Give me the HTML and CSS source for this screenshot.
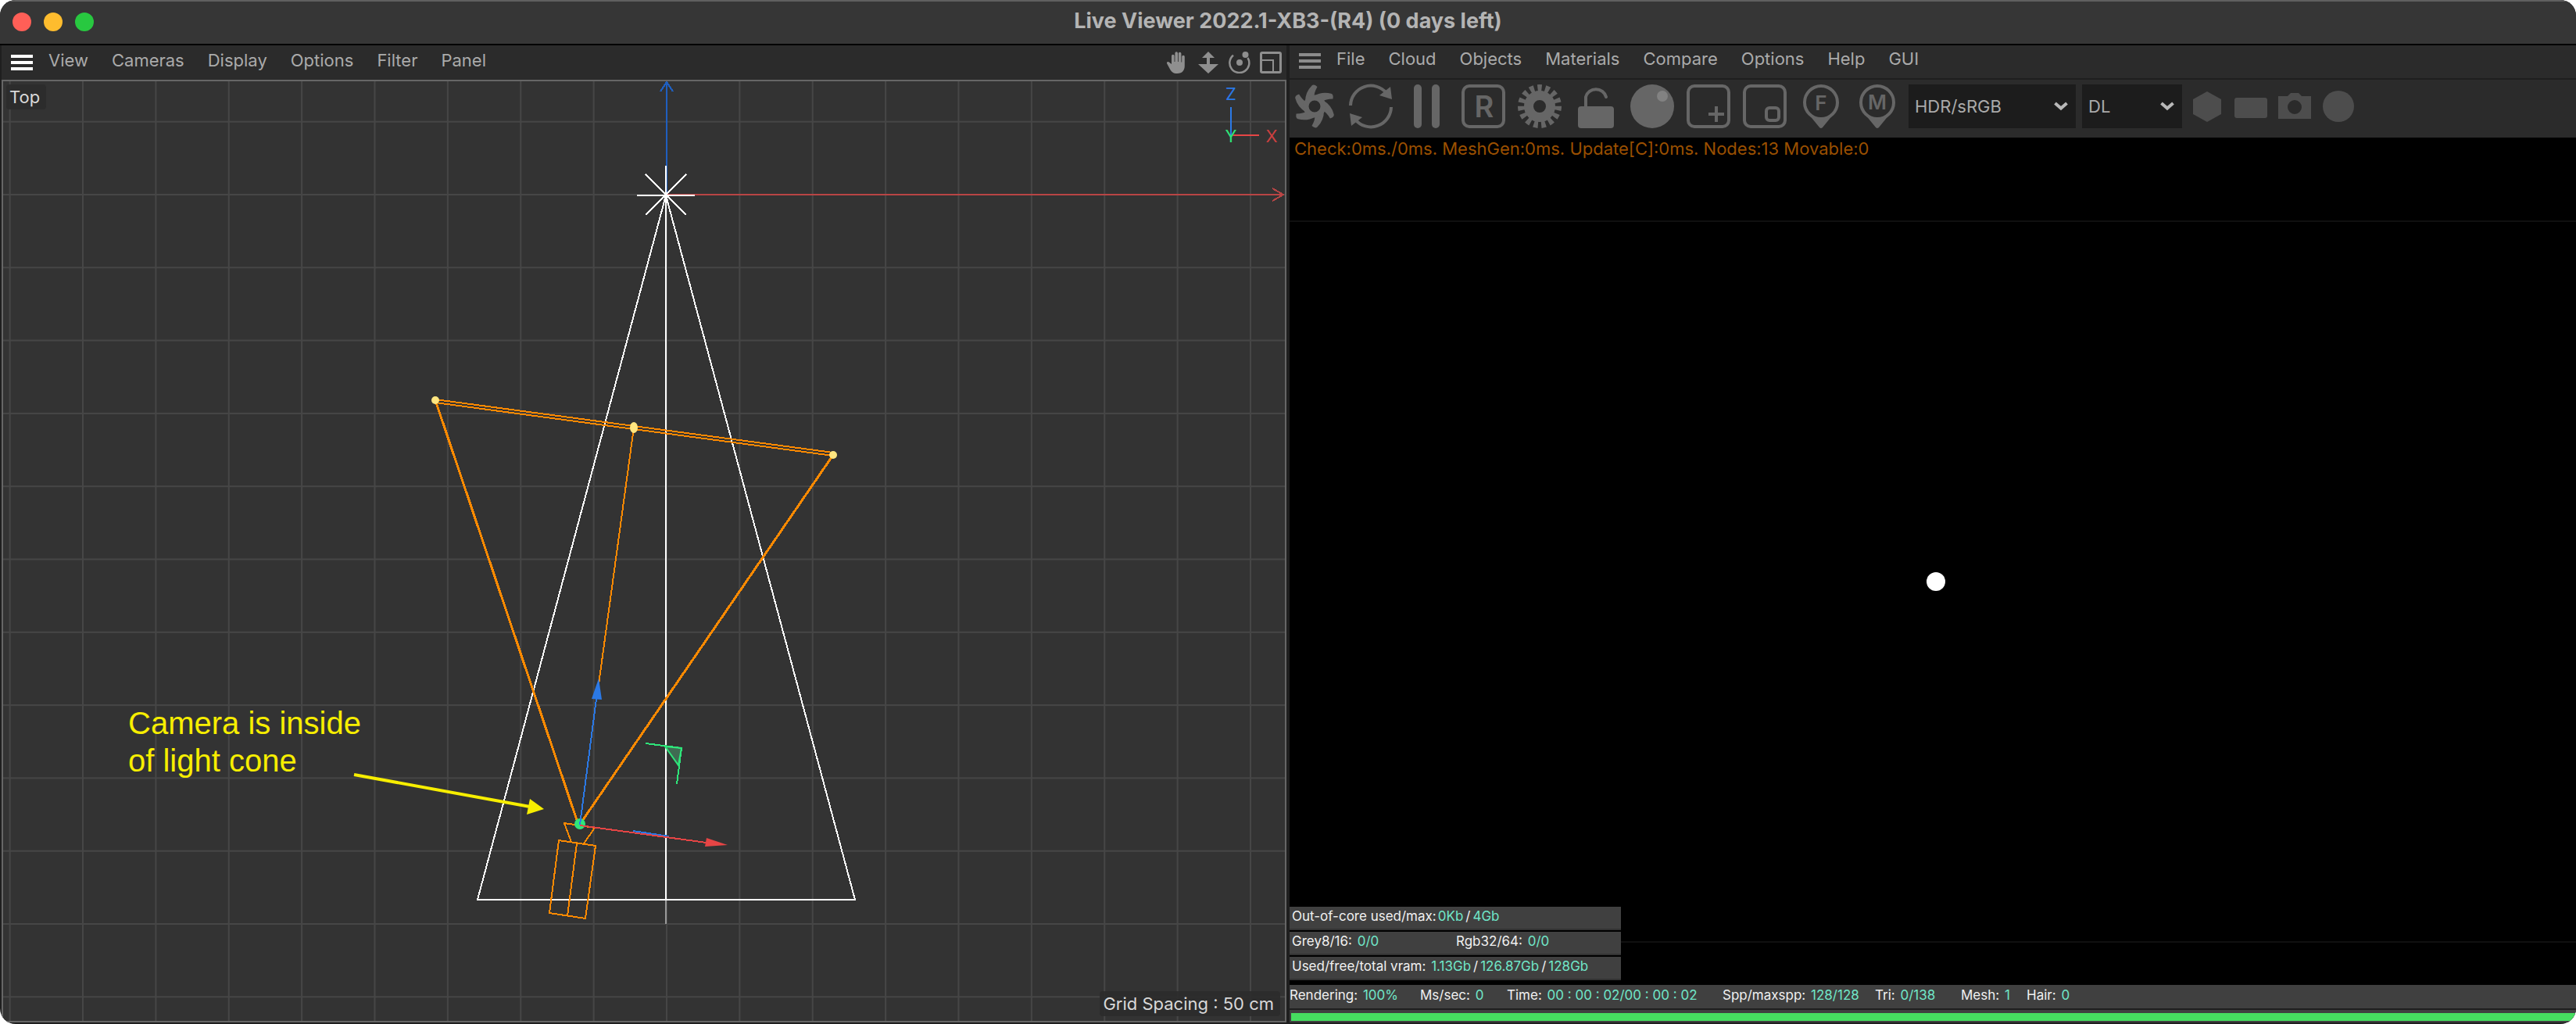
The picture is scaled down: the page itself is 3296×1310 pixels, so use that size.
FILE: index.html
```html
<!DOCTYPE html>
<html lang="en">
<head>
<meta charset="utf-8">
<meta name="viewport" content="width=device-width, initial-scale=1">
<title>Live Viewer 2022.1-XB3-(R4)</title>
<link rel="stylesheet" href="styles.css">
</head>
<body>
<div class="window">
  <header class="titlebar">
    <div class="lights">
      <button class="light light-close" aria-label="Close"></button>
      <button class="light light-minimise" aria-label="Minimise"></button>
      <button class="light light-zoom" aria-label="Zoom"></button>
    </div>
    <h1 class="title">Live Viewer 2022.1-XB3-(R4) (0 days left)</h1>
  </header>

  <main class="panels">
    <section class="panel panel-scene" aria-label="Top viewport">
      <nav class="menubar">
        <button class="burger burger-bright" aria-label="Viewport menu"><span></span><span></span><span></span></button>
        <ul class="menu">
          <li><button>View</button></li>
          <li><button>Cameras</button></li>
          <li><button>Display</button></li>
          <li><button>Options</button></li>
          <li><button>Filter</button></li>
          <li><button>Panel</button></li>
        </ul>
        <div class="view-tools">
          <button aria-label="Pan"><svg viewBox="0 0 28 28"><path fill="currentColor" d="M7 16V5.500a1.800 1.800 0 0 1 3.600 0V13h.8V2a1.800 1.800 0 0 1 3.600 0v11h.8V2.500a1.800 1.800 0 0 1 3.600 0V13.500h.8V6.500a1.800 1.800 0 0 1 3.600 0V18c0 6-3 10-9.500 10C9 28 7 26 5 22.500L1.200 15.500c-1-2 1-3.500 2.600-2z"/></svg></button>
          <button aria-label="Move"><svg viewBox="0 0 28 28"><path fill="currentColor" d="M14 0l8 8h-6v8h11L14 28 1 16h11V8H6z"/></svg></button>
          <button aria-label="Rotate"><svg viewBox="0 0 28 28"><path fill="none" stroke="currentColor" stroke-width="2.500" d="M6 4.800A12.500 12.500 0 1 0 24.500 8"/><circle cx="14" cy="14" r="4" fill="currentColor"/><circle cx="21.500" cy="4" r="4" fill="currentColor"/></svg></button>
          <button aria-label="Maximise view"><svg viewBox="0 0 28 28"><g fill="none" stroke="currentColor"><rect x="1.500" y="1.500" width="25" height="25" rx="1.500" stroke-width="3"/><path stroke-width="2" d="M3 11h14v14"/></g></svg></button>
        </div>
      </nav>
      <div class="viewport">
        <svg class="scene" viewBox="4 104 1640 1202" preserveAspectRatio="xMidYMid slice" role="img" aria-label="Camera placed inside a light cone">
          <defs>
            <pattern id="grid" x="852" y="248" width="93.375" height="93.300" patternUnits="userSpaceOnUse">
              <path d="M0 1H93.375M1 0V93.300" fill="none" stroke="#464646" stroke-width="2"/>
            </pattern>
          </defs>
          <rect x="4" y="104" width="1640" height="1202" fill="url(#grid)"/>

          <!-- world axes -->
          <g class="wire">
            <path stroke="#1f5fbf" d="M853 249V105M845 117l8-12 8 12"/>
            <path stroke="#b84545" d="M853 249H1642M1628 241l14 8-14 8"/>
          </g>

          <!-- light cone -->
          <g class="wire" stroke="#fff">
            <path d="M852 250L611 1151H1094L852 250V1151M852 212V250M815 250H889M826 223L878 275M878 223L826 275"/>
            <path stroke="#999" d="M852 1152V1182"/>
          </g>

          <!-- camera frustum and body -->
          <g class="wire" stroke="#ff8a00">
            <path d="M557 511L811 545L1066 579M557 515L811 549L1066 583"/>
            <path class="wire wire-heavy" d="M557 512L739 1052M1066 582L743 1053"/>
            <path d="M811 547L764 890"/>
            <path d="M731 1077L722 1053L761 1059L747 1079M715 1075L762 1082L749 1175L703 1168ZM738 1079L726 1172"/>
          </g>
          <g fill="#ffe680">
            <ellipse cx="557" cy="512" rx="5" ry="5"/>
            <ellipse cx="811" cy="547" rx="5" ry="7"/>
            <ellipse cx="1066" cy="582" rx="5" ry="5"/>
          </g>

          <!-- object axis handles -->
          <circle cx="742" cy="1054" r="7" fill="#2ee67a"/>
          <path class="wire" stroke="#2b79e6" d="M742 1055L763 894"/>
          <path fill="#2b79e6" d="M757 894L770 895L766 868Z"/>
          <path class="wire" stroke="#2b79e6" d="M810 1063L856 1070"/>
          <path class="wire" stroke="#e64545" d="M742 1056L904 1078"/>
          <path fill="#e64545" d="M904 1072L902 1083L931 1081Z"/>
          <path fill="#3f6b52" stroke="#2ee67a" stroke-width="2" d="M851 955L872 957L868 979Z"/>
          <path class="wire" stroke="#2ee67a" d="M826 951L872 957L866 1003"/>

          <!-- note -->
          <g fill="#f7ee00">
            <text class="note" x="164" y="939">Camera is inside</text>
            <text class="note" x="164" y="987">of light cone</text>
            <path stroke="#f7ee00" stroke-width="4" d="M453 991L678 1032"/>
            <path d="M678 1022L674 1042L696 1035Z"/>
          </g>

          <!-- orientation gizmo -->
          <g class="wire">
            <path stroke="#e64545" d="M1576 173H1611"/>
            <path stroke="#2b79e6" d="M1575 137V173"/>
          </g>
          <g class="axis-name">
            <text x="1575" y="128" fill="#2b79e6">Z</text>
            <text x="1575" y="182" fill="#2ee67a">Y</text>
            <text x="1627" y="182" fill="#cc4040">X</text>
          </g>
        </svg>
        <span class="tag tag-name">Top</span>
        <span class="tag tag-grid">Grid Spacing : 50 cm</span>
      </div>
    </section>

    <section class="panel panel-render" aria-label="Render view">
      <nav class="menubar">
        <button class="burger" aria-label="Render menu"><span></span><span></span><span></span></button>
        <ul class="menu">
          <li><button>File</button></li>
          <li><button>Cloud</button></li>
          <li><button>Objects</button></li>
          <li><button>Materials</button></li>
          <li><button>Compare</button></li>
          <li><button>Options</button></li>
          <li><button>Help</button></li>
          <li><button>GUI</button></li>
        </ul>
      </nav>
      <div class="toolbar">
        <div class="tools">
          <button aria-label="Send scene"><svg viewBox="0 0 56 56"><defs><path id="blade" d="M24.500 1.500Q27-1 31.500 3Q27 11 27.500 17L16 22Q16 10 24.500 1.500Z"/></defs><g fill="currentColor"><use href="#blade"/><use href="#blade" transform="rotate(60 28 28)"/><use href="#blade" transform="rotate(120 28 28)"/><use href="#blade" transform="rotate(180 28 28)"/><use href="#blade" transform="rotate(240 28 28)"/><use href="#blade" transform="rotate(300 28 28)"/></g><circle cx="28" cy="28" r="11" fill="none" stroke="currentColor" stroke-width="7"/></svg></button>
          <button aria-label="Restart render"><svg viewBox="0 0 56 56"><defs><g id="turn"><path fill="none" stroke="currentColor" stroke-width="4" d="M2 27A26 26 0 0 1 48 11"/><path fill="currentColor" d="M53 3L55 19L39 14Z"/></g></defs><use href="#turn"/><use href="#turn" transform="rotate(180 28 28)"/></svg></button>
          <button aria-label="Pause"><svg viewBox="0 0 56 56"><g fill="currentColor"><rect x="11" y="0" width="10" height="56" rx="5"/><rect x="34" y="0" width="10" height="56" rx="5"/></g></svg></button>
          <button aria-label="Region reset"><svg viewBox="0 0 56 56"><rect x="2" y="2" width="52" height="52" rx="8" fill="none" stroke="currentColor" stroke-width="4"/><text class="glyph glyph-big" x="29" y="42">R</text></svg></button>
          <button aria-label="Settings"><svg viewBox="0 0 56 56"><g fill="none" stroke="currentColor"><circle cx="28" cy="28" r="14" stroke-width="12"/><circle cx="28" cy="28" r="23" stroke-width="10" pathLength="30" stroke-dasharray="1.100 .9" stroke-dashoffset=".55" transform="rotate(-90 28 28)"/></g></svg></button>
          <button aria-label="Lock resolution"><svg viewBox="0 0 56 56"><rect x="5" y="28" width="46" height="28" rx="4" fill="currentColor"/><path fill="none" stroke="currentColor" stroke-width="4" d="M15 30V16A13.500 13.500 0 0 1 41 16" stroke-linecap="round"/></svg></button>
          <button aria-label="Clay mode"><svg viewBox="0 0 56 56"><circle cx="28" cy="28" r="28" fill="currentColor"/><circle cx="41" cy="15" r="7" fill="#828282"/></svg></button>
          <button aria-label="Add region"><svg viewBox="0 0 56 56"><g fill="none" stroke="currentColor" stroke-width="4"><rect x="2" y="2" width="52" height="52" rx="8"/><path d="M28 38H48M38 28V48"/></g></svg></button>
          <button aria-label="Film region"><svg viewBox="0 0 56 56"><g fill="none" stroke="currentColor" stroke-width="4"><rect x="2" y="2" width="52" height="52" rx="8"/><rect x="30" y="30" width="16" height="16" rx="4"/></g></svg></button>
          <button aria-label="Pick focus"><svg viewBox="0 0 56 56"><circle cx="28" cy="23" r="21" fill="none" stroke="currentColor" stroke-width="4"/><path fill="currentColor" d="M8 33L26 55Q28 57 30 55L48 33Q40 43 28 43Q16 43 8 33Z"/><text class="glyph" x="28" y="33">F</text></svg></button>
          <button aria-label="Pick material"><svg viewBox="0 0 56 56"><circle cx="28" cy="23" r="21" fill="none" stroke="currentColor" stroke-width="4"/><path fill="currentColor" d="M8 33L26 55Q28 57 30 55L48 33Q40 43 28 43Q16 43 8 33Z"/><text class="glyph" x="28" y="32">M</text></svg></button>
        </div>
        <div class="pickers">
          <label class="picker picker-wide">
            <select aria-label="Colour space"><option>HDR/sRGB</option></select>
            <svg viewBox="0 0 18 12"><path fill="none" stroke="currentColor" stroke-width="4" d="M1.500 2L9 8.500L16.500 2"/></svg>
          </label>
          <label class="picker">
            <select aria-label="Kernel"><option>DL</option></select>
            <svg viewBox="0 0 18 12"><path fill="none" stroke="currentColor" stroke-width="4" d="M1.500 2L9 8.500L16.500 2"/></svg>
          </label>
        </div>
        <div class="tools tools-small">
          <button aria-label="Object"><svg viewBox="0 0 40 40"><path fill="currentColor" d="M20 1L38 11V30L20 40L2 30V11Z"/></svg></button>
          <button aria-label="Plane"><svg viewBox="0 0 40 40"><rect x="-1" y="9" width="42" height="26" rx="3" fill="currentColor"/></svg></button>
          <button aria-label="Camera"><svg viewBox="0 0 40 40"><path fill="currentColor" fill-rule="evenodd" d="M0 7H11L15 3H25L29 7H41V36H-1V7ZM20 12A9 9 0 1 0 20 30A9 9 0 1 0 20 12Z"/></svg></button>
          <button aria-label="Environment"><svg viewBox="0 0 40 40"><circle cx="20" cy="20" r="20" fill="currentColor"/></svg></button>
        </div>
      </div>

      <div class="render">
        <p class="check">Check:0ms./0ms. MeshGen:0ms. Update[C]:0ms. Nodes:13 Movable:0</p>
        <div class="frame"><div class="spot"></div></div>
        <div class="memory">
          <p class="row">Out-of-core used/max:<b>0Kb</b><i>/</i><b>4Gb</b></p>
          <p class="row row-split"><span>Grey8/16: <b>0/0</b></span><span>Rgb32/64: <b>0/0</b></span></p>
          <p class="row">Used/free/total vram: <b>1.13Gb</b><i>/</i><b>126.87Gb</b><i>/</i><b>128Gb</b></p>
        </div>
      </div>

      <footer class="status">
        <div class="figures">
          <span>Rendering: <b>100%</b></span>
          <span>Ms/sec: <b>0</b></span>
          <span>Time: <b>00 : 00 : 02/00 : 00 : 02</b></span>
          <span>Spp/maxspp: <b>128/128</b></span>
          <span>Tri: <b>0/138</b></span>
          <span>Mesh: <b>1</b></span>
          <span>Hair: <b>0</b></span>
        </div>
        <progress value="100" max="100" aria-label="Render progress"></progress>
      </footer>
    </section>
  </main>
</div>
</body>
</html>
```
FILE: styles.css
```css
* { box-sizing: border-box; }

body {
  margin: 0;
  background: #fff;
  color: #aaa;
  font: 22px/28px Inter, "Liberation Sans", sans-serif;
}

button {
  padding: 0;
  border: 0;
  background: none;
  color: inherit;
  font: inherit;
}

svg { display: block; }
p { margin: 0; }

.window {
  display: flex;
  flex-direction: column;
  min-height: 100vh;
  overflow: hidden;
  border-radius: 20px;
  background: #1f1f1f;
}

/* title bar */
.titlebar {
  display: grid;
  grid-template-columns: 1fr auto 1fr;
  align-items: center;
  height: 58px;
  padding: 0 16px;
  border-bottom: 2px solid #000;
  background: #363636;
  box-shadow: inset 0 2px #606060;
}

.lights { display: flex; gap: 16px; }
.light { width: 24px; height: 24px; border-radius: 50%; }
.light-close { background: #ff5f57; }
.light-minimise { background: #febc2e; }
.light-zoom { background: #28c840; }

.title {
  margin: 0;
  padding-bottom: 2px;
  color: #b4b4b4;
  font-size: 27px;
  font-weight: 700;
  line-height: 32px;
}

/* panels */
.panels {
  flex: 1;
  display: grid;
  grid-template-columns: 1fr 1fr;
}

.panel { display: flex; flex-direction: column; min-width: 0; }
.panel-scene { padding: 0 2px 2px; }
.panel-render { padding: 0 0 2px 2px; }

.menubar {
  display: flex;
  align-items: center;
  gap: 20px;
  height: 44px;
  padding: 0 12px;
  background: #2b2b2b;
}
.panel-render .menubar { padding-bottom: 2px; border-bottom: 2px solid #1f1f1f; }

.burger { display: grid; gap: 4px; width: 28px; color: #8c8c8c; }
.burger span { height: 4px; background: currentColor; }
.burger-bright { color: #fff; }

.menu {
  display: flex;
  gap: 30px;
  margin: 0;
  padding: 0 0 6px;
  list-style: none;
}

.view-tools {
  display: flex;
  gap: 12px;
  margin-left: auto;
  margin-right: -6px;
  color: #8f8f8f;
}
.view-tools svg { width: 28px; height: 28px; }

/* scene viewport */
.viewport {
  position: relative;
  flex: 1;
  min-height: 400px;
  border: 2px solid #666;
  background: #333;
}
.scene { position: absolute; inset: 0; width: 100%; height: 100%; }
.wire { fill: none; stroke-width: 2; shape-rendering: crispEdges; }
.wire-heavy { stroke-width: 3; }
.note { font: 40px "Liberation Sans", Arial, sans-serif; }
.axis-name { font: 22px Inter, sans-serif; text-anchor: middle; }

.tag {
  position: absolute;
  padding: 2px 8px 2px 4px;
  border-radius: 4px;
  background: #2b2b2be6;
  color: #d9d9d9;
}
.tag-name { top: 4px; left: 4px; }
.tag-grid { right: 6px; bottom: 6px; }

/* render toolbar */
.toolbar {
  display: flex;
  gap: 12px;
  height: 74px;
  padding: 6px 4px 12px;
  background: #2b2b2b;
}
.tools { display: flex; align-items: center; gap: 16px; color: #666; }
.tools svg { width: 56px; height: 56px; overflow: visible; }
.tools-small { color: #4d4d4d; }
.tools-small svg { width: 40px; height: 40px; }

.glyph { fill: currentColor; font: 600 26px Inter, sans-serif; text-anchor: middle; }
.glyph-big { font-size: 38px; }

.pickers { display: flex; gap: 8px; }
.picker {
  display: grid;
  align-items: center;
  width: 128px;
  height: 56px;
  background: #1c1c1c;
}
.picker-wide { width: 214px; }
.picker select, .picker svg { grid-area: 1 / 1; }
.picker select {
  appearance: none;
  width: 100%;
  height: 100%;
  padding: 0 36px 0 8px;
  border: 0;
  border-radius: 0;
  background: none;
  color: inherit;
  font: inherit;
}
.picker svg {
  justify-self: end;
  width: 18px;
  height: 12px;
  margin-right: 10px;
  color: #b8b8b8;
  pointer-events: none;
}

/* render output */
.render {
  position: relative;
  flex: 1;
  display: flex;
  flex-direction: column;
  padding-bottom: 54px;
  background: #000;
}
.check { padding-left: 6px; color: #9a4f00; }
.frame {
  flex: 1;
  display: grid;
  place-items: center;
  margin-top: 78px;
  padding-left: 8px;
  border: solid #101010;
  border-width: 2px 0;
}
.spot { width: 24px; height: 24px; border-radius: 50%; background: #fff; }

.memory {
  position: absolute;
  left: 0;
  bottom: 6px;
  display: grid;
  gap: 2px;
  width: 424px;
}
.row {
  height: 30px;
  padding-left: 3px;
  border-bottom: 2px solid #333;
  background: #404040;
}
.row-split { display: grid; grid-template-columns: 210px 1fr; }

.row, .figures { color: #f0f0f0; font-size: 17px; line-height: 24px; white-space: nowrap; }
.row b, .figures b { color: #70e6c8; font-weight: 400; }
.row b, .figures b { margin-left: 2px; }
.row i { padding: 0 1px 0 3px; font-style: normal; }

/* status bar */
.status { background: #404040; }
.figures {
  display: grid;
  grid-template-columns: 167px 111px 276px 195px 110px 84px 1fr;
  height: 32px;
  padding-top: 1px;
  border-bottom: 2px solid #1f1f1f;
}
progress {
  appearance: none;
  display: block;
  width: 100%;
  height: 16px;
  padding: 4px 0 2px 2px;
  border: 0;
  background: #404040;
}
progress::-webkit-progress-bar { background: #404040; }
progress::-webkit-progress-value { background: #46de60; }
progress::-moz-progress-bar { background: #46de60; }
```
